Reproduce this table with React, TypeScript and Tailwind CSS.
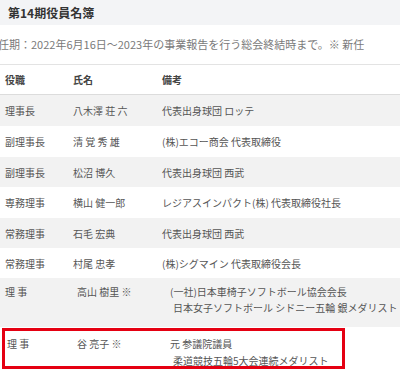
import React from "react";

type Row = {
  role: string;
  name: string;
  note: string[];
  bg: string;
  h: string;
};

const rows: Row[] = [
  { role: "理事長", name: "八木澤 荘 六", note: ["代表出身球団 ロッテ"], bg: "bg-[#f2f2f2]", h: "h-[31px]" },
  { role: "副理事長", name: "清 覚 秀 雄", note: ["(株)エコー商会 代表取締役"], bg: "bg-white", h: "h-[31px]" },
  { role: "副理事長", name: "松沼 博久", note: ["代表出身球団 西武"], bg: "bg-[#f2f2f2]", h: "h-[30px]" },
  { role: "専務理事", name: "横山 健一郎", note: ["レジアスインパクト(株) 代表取締役社長"], bg: "bg-white", h: "h-[31px]" },
  { role: "常務理事", name: "石毛 宏典", note: ["代表出身球団 西武"], bg: "bg-[#f2f2f2]", h: "h-[30px]" },
  { role: "常務理事", name: "村尾 忠孝", note: ["(株)シグマイン 代表取締役会長"], bg: "bg-white", h: "h-[30px]" },
];

const App = () => {
  return (
    <div
      className="w-[400px] h-[371px] overflow-hidden bg-white text-[#555]"
      style={{ fontFamily: '"Noto Sans CJK JP", "Noto Sans", sans-serif' }}
    >
      {/* Title */}
      <div className="h-[25px] bg-[#f3f4f6] pl-[8px] flex items-center text-[12px] font-bold text-[#333]">
        第14期役員名簿
      </div>

      {/* Term */}
      <div className="h-[40px] flex items-center border-b border-[#e3e3e3] text-[11px] text-[#7a7a7a] whitespace-nowrap">
        <span className="-ml-[2px]">
          任期：2022年6月16日～2023年の事業報告を行う総会終結時まで。※ 新任
        </span>
      </div>

      {/* Table head */}
      <div className="h-[30px] flex items-center border-b border-[#dcdcdc] text-[10px] font-bold text-[#444]">
        <div className="w-[68px] pl-[5px]">役職</div>
        <div className="w-[89px] pl-[5px]">氏名</div>
        <div className="flex-1 pl-[5px]">備考</div>
      </div>

      {/* Rows */}
      {rows.map((r, i) => (
        <div key={i} className={`${r.h} ${r.bg} flex items-center text-[10px] whitespace-nowrap`}>
          <div className="w-[68px] pl-[5px]">{r.role}</div>
          <div className="w-[89px] pl-[5px]">{r.name}</div>
          <div className="flex-1 pl-[5px]">{r.note[0]}</div>
        </div>
      ))}

      <div className="h-[49px] bg-[#f2f2f2] flex text-[10px] leading-[16px] pt-[6px] whitespace-nowrap">
        <div className="w-[72px] pl-[5px]">理 事</div>
        <div className="w-[90px] pl-[5px]">高山 樹里 ※</div>
        <div className="flex-1 pl-[8px]">
          <div>(一社)日本車椅子ソフトボール協会会長</div>
          <div className="pl-[3px]">日本女子ソフトボール シドニー五輪 銀メダリスト</div>
        </div>
      </div>

      {/* Highlighted row */}
      <div className="ml-[2px] mt-[1px] w-[343px] h-[41px] border-[3px] border-[#e50012] flex text-[10px] leading-[17px] pt-[4px] whitespace-nowrap">
        <div className="w-[67px] pl-[2px]">理 事</div>
        <div className="w-[92px] pl-[5px]">谷 亮子 ※</div>
        <div className="flex-1 pl-[6px]">
          <div>元 参議院議員</div>
          <div className="pl-[3px]">柔道競技五輪5大会連続メダリスト</div>
        </div>
      </div>
    </div>
  );
};

export default App;
